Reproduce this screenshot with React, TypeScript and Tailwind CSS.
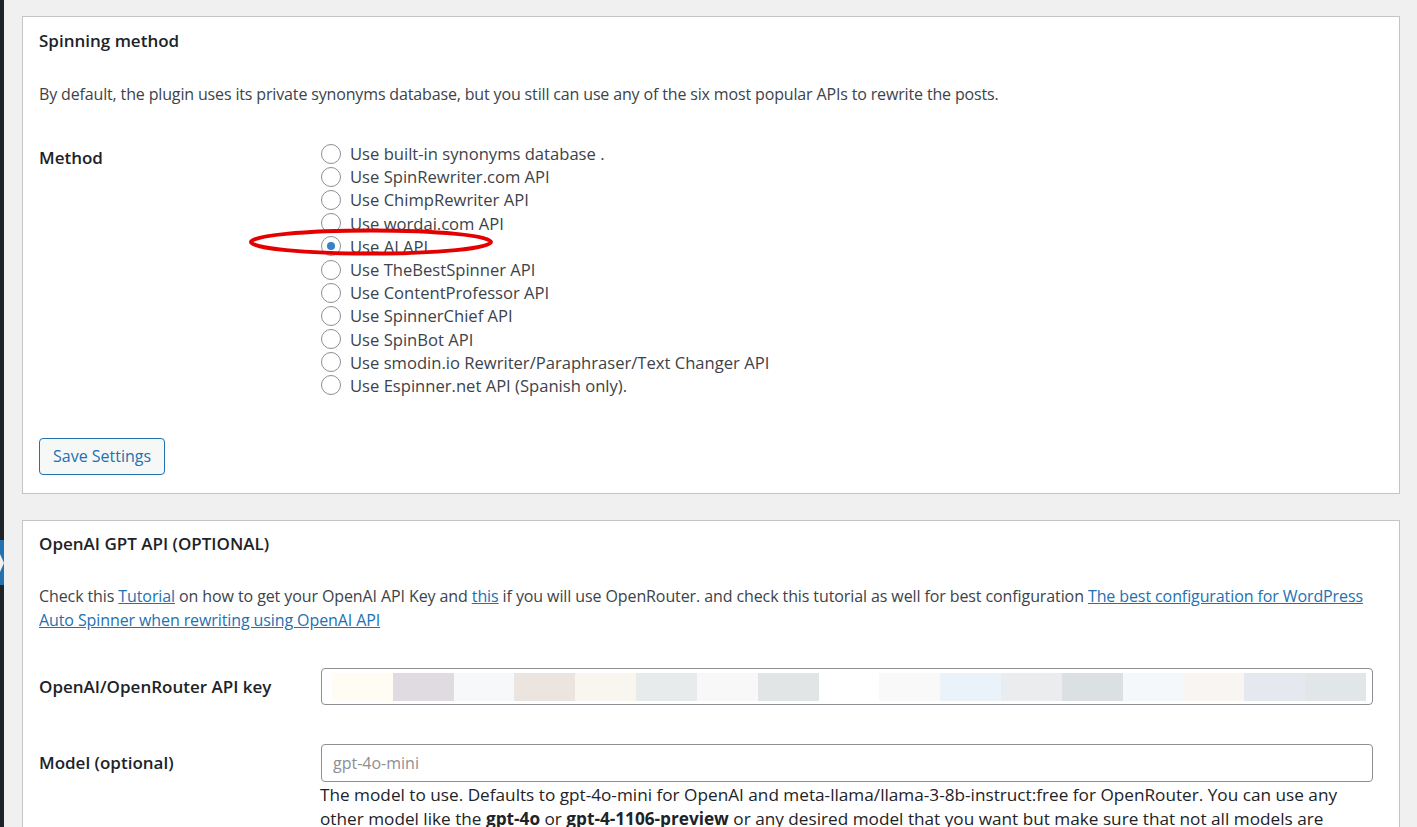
import { useState } from 'react';

const METHODS = [
  'Use built-in synonyms database .',
  'Use SpinRewriter.com API',
  'Use ChimpRewriter API',
  'Use wordai.com API',
  'Use AI API',
  'Use TheBestSpinner API',
  'Use ContentProfessor API',
  'Use SpinnerChief API',
  'Use SpinBot API',
  'Use smodin.io Rewriter/Paraphraser/Text Changer API',
  'Use Espinner.net API (Spanish only).',
];

// redacted key, rendered as colour blocks
const KEY_BLOCKS = [
  '#fffcf3', '#e0dbe0', '#f7f8fa', '#ece4df', '#f8f6ee', '#e8ebec', '#f8f8f8', '#e2e5e6',
  '#ffffff', '#f9f9f9', '#eaf2fa', '#ebecee', '#dbe0e2', '#f5f8fb', '#f8f5f2', '#e6e8f0', '#e1e6e9',
];

export default function App() {
  const [method, setMethod] = useState(4);

  return (
    <div className="flex min-h-screen bg-[#f0f0f1] font-['Open_Sans',sans-serif] text-[16px] text-[#3c434a]">
      <div className="relative w-[4px] shrink-0 bg-[#1d2327]">
        <div className="absolute left-0 top-[540px] h-[45px] w-[4px] bg-[#2271b1]" />
        <div className="absolute left-0 top-[554px] h-0 w-0 border-y-[9px] border-l-[4px] border-y-transparent border-l-[#f0f0f1]" />
      </div>

      <main className="flex-1 pl-[18px] pr-[17px] pt-[16px]">
        <section className="border border-[#c3c4c7] bg-white px-[16px] pb-[18px]">
          <h2 className="pt-[12px] text-[17px] font-semibold leading-[24px] text-[#1d2327]">Spinning method</h2>
          <p className="mt-[29px] leading-[24px] tracking-[-0.15px]">
            By default, the plugin uses its private synonyms database, but you still can use any of the six most popular APIs to rewrite the posts.
          </p>

          <div className="mt-[36px] flex">
            <div className="w-[282px] shrink-0 pt-[4px] text-[17px] font-semibold leading-[24px] text-[#1d2327]">Method</div>
            <div className="relative">
              <svg className="pointer-events-none absolute left-[-73px] top-[85px]" width="246" height="30" viewBox="0 0 246 30">
                <ellipse cx="123" cy="15" rx="120" ry="11.5" fill="none" stroke="#e40000" strokeWidth="4" />
              </svg>
              {METHODS.map((label, i) => (
                <label key={label} className="flex h-[23.2px] cursor-pointer items-center gap-[9px] text-[16.6px] leading-[23px]">
                  <span
                    onClick={() => setMethod(i)}
                    className="grid size-[20px] shrink-0 place-items-center rounded-full border border-[#8c8f94] bg-white"
                  >
                    {method === i ? <span className="size-[8px] rounded-full bg-[#3582c4]" /> : null}
                  </span>
                  <span>{label}</span>
                </label>
              ))}
            </div>
          </div>

          <button
            type="button"
            className="mt-[41px] h-[37px] rounded-[4px] border border-[#2271b1] bg-[#f6f7f7] px-[13px] text-[16px] leading-[35px] text-[#2271b1]"
          >
            Save Settings
          </button>
        </section>

        <section className="mt-[26px] border border-[#c3c4c7] bg-white pl-[16px] pr-[26px] pb-[20px]">
          <h2 className="pt-[11px] text-[17px] font-semibold leading-[24px] text-[#1d2327]">OpenAI GPT API (OPTIONAL)</h2>
          <p className="mr-[-10px] mt-[28px] leading-[24px] tracking-[-0.1px]">
            Check this <a href="#" className="text-[#2271b1] underline">Tutorial</a> on how to get your OpenAI API Key and{' '}
            <a href="#" className="text-[#2271b1] underline">this</a> if you will use OpenRouter. and check this tutorial as well for best configuration{' '}
            <a href="#" className="text-[#2271b1] underline">The best configuration for WordPress Auto Spinner when rewriting using OpenAI API</a>
          </p>

          <div className="mt-[36px] flex items-center">
            <div className="w-[282px] shrink-0 text-[17px] font-semibold leading-[24px] text-[#1d2327]">OpenAI/OpenRouter API key</div>
            <div className="flex h-[37px] flex-1 items-center rounded-[4px] border border-[#8c8f94] bg-white pl-[10px] pr-[6px]">
              <div className="flex h-[28px] w-full">
                {KEY_BLOCKS.map((c, i) => (
                  <div key={i} className="h-full flex-1" style={{ backgroundColor: c }} />
                ))}
              </div>
            </div>
          </div>

          <div className="mt-[39px] flex">
            <div className="w-[282px] shrink-0 pt-[7px] text-[17px] font-semibold leading-[24px] text-[#1d2327]">Model (optional)</div>
            <div className="flex-1">
              <input
                type="text"
                placeholder="gpt-4o-mini"
                className="block h-[38px] w-full rounded-[4px] border border-[#8c8f94] bg-white px-[11px] text-[16px] text-[#2c3338] outline-none placeholder:text-[#8c8f94]"
              />
              <p className="ml-[-1px] mt-[1px] text-[17.2px] leading-[24px] text-[#1d2327]">
                The model to use. Defaults to gpt-4o-mini for OpenAI and meta-llama/llama-3-8b-instruct:free for OpenRouter. You can use any
                <br />
                other model like the <b>gpt-4o</b> or <b>gpt-4-1106-preview</b> or any desired model that you want but make sure that not all models are
                <br />
                compatible with the chat completions endpoint.
              </p>
            </div>
          </div>
        </section>
      </main>
    </div>
  );
}
